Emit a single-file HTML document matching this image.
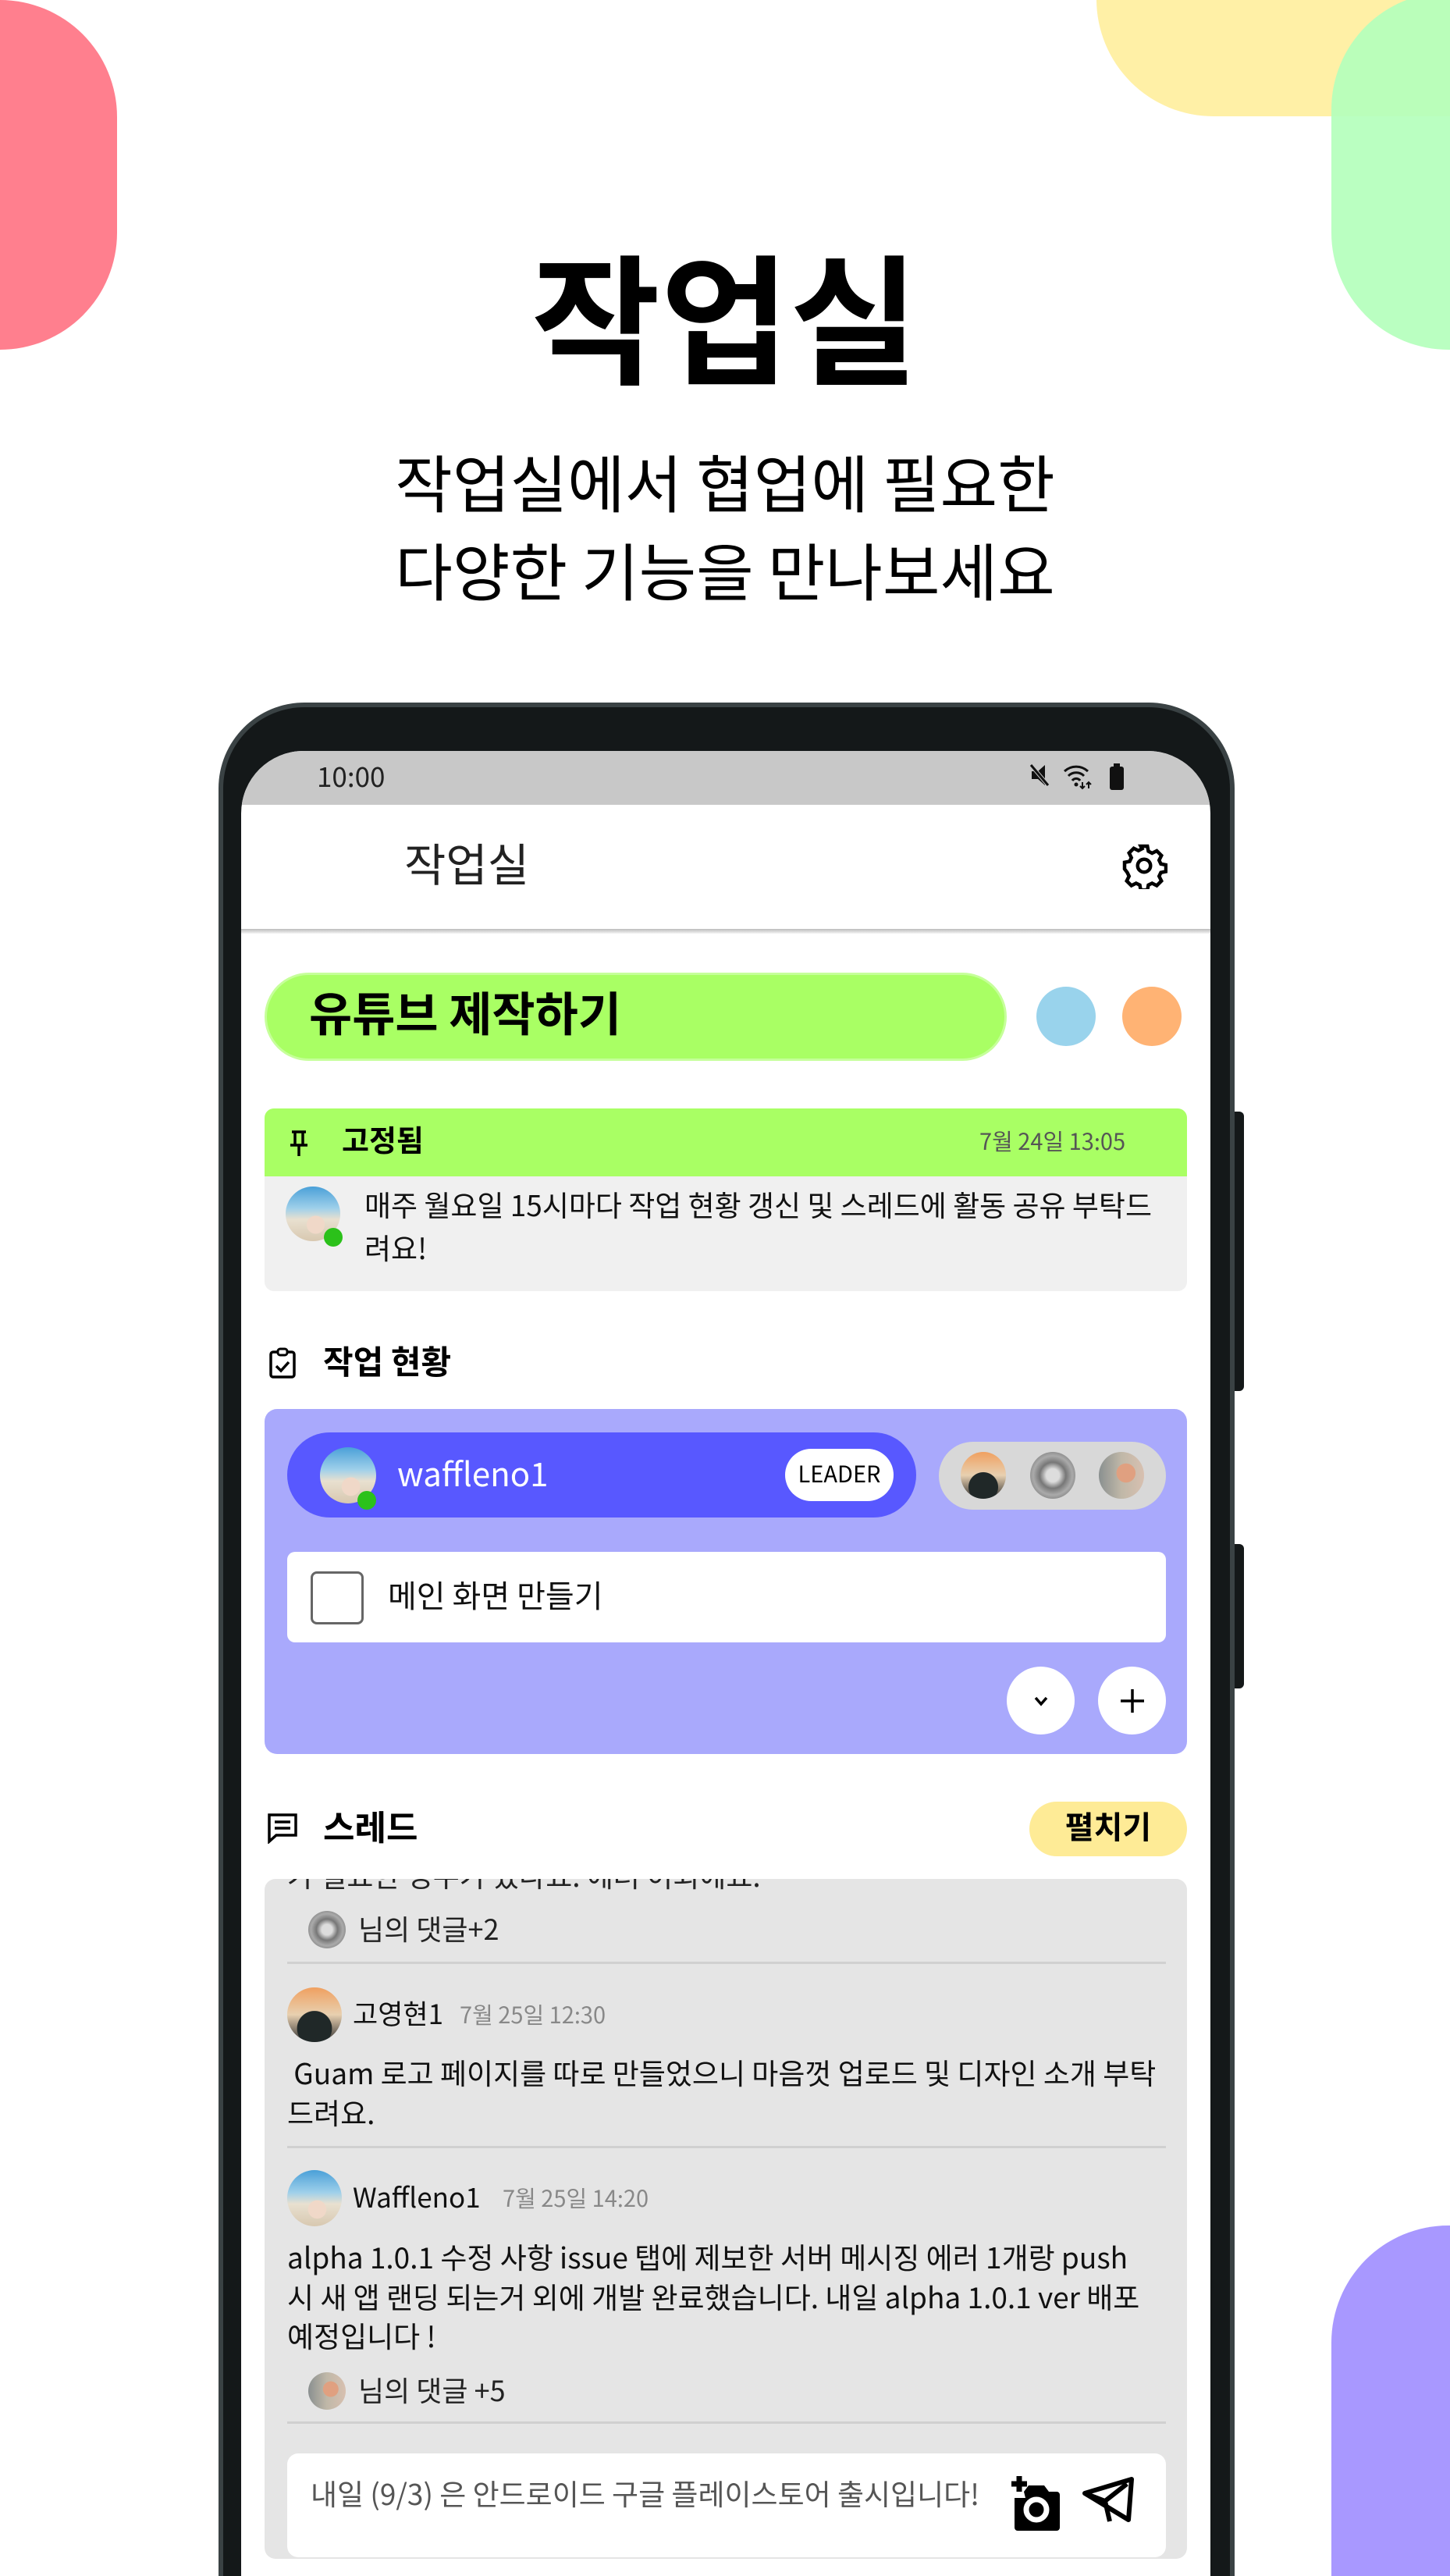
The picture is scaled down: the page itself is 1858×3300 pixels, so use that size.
<!DOCTYPE html>
<html><head><meta charset="utf-8">
<style>
*{margin:0;padding:0;box-sizing:border-box}
html,body{width:1858px;height:3300px;overflow:hidden}
body{position:relative;background:#fff;font-family:"Noto Sans CJK KR","Liberation Sans",sans-serif;color:#000}
#w{position:absolute;left:0;top:0;width:1858px;height:3300px;overflow:hidden}
.a{position:absolute}
.t{position:absolute;white-space:nowrap;line-height:1}
.av{position:absolute;border-radius:50%}
.beach{background:radial-gradient(circle at 55% 70%,#f0d8c8 0 18%,transparent 19%),linear-gradient(#4aa0d8 0%,#9fd0ea 40%,#e8e0d0 60%,#d8c8b0 100%)}
.dark{background:radial-gradient(circle at 50% 75%,#202828 0 35%,transparent 36%),linear-gradient(#f0a060,#e8d0b0 50%,#303030)}
.gray{background:radial-gradient(circle at 50% 50%,#ddd 0 20%,#777 40%,#aaa 60%,#555 100%)}
.woman{background:radial-gradient(circle at 60% 45%,#e0a080 0 25%,transparent 26%),linear-gradient(90deg,#8a9090,#c0b8a8 50%,#d8c0b0)}
.dot{position:absolute;width:24px;height:24px;border-radius:50%;background:#2bc11a}
</style></head><body><div id="w">
<div class="a" style="left:-150px;top:0;width:300px;height:448px;background:#ff7f8e;border-radius:0 150px 150px 0"></div>
<div class="a" style="left:1405px;top:-300px;width:600px;height:449px;background:#fff0a6;border-radius:150px"></div>
<div class="a" style="left:1706px;top:-10px;width:300px;height:458px;background:#b4ffbc;border-radius:150px;opacity:.92"></div>
<div class="a" style="left:1706px;top:2851px;width:300px;height:600px;background:#a898ff;border-radius:150px"></div>

<div class="t" style="left:0;width:1858px;text-align:center;top:310px;font-size:180px;font-weight:bold">작업실</div>
<div class="t" style="left:0;width:1858px;text-align:center;top:576px;font-size:80px">작업실에서 협업에 필요한</div>
<div class="t" style="left:0;width:1858px;text-align:center;top:689px;font-size:80px">다양한 기능을 만나보세요</div>

<div class="a" style="left:1580px;top:1424px;width:14px;height:358px;background:#141819;border-radius:0 6px 6px 0"></div>
<div class="a" style="left:1580px;top:1978px;width:14px;height:185px;background:#141819;border-radius:0 6px 6px 0"></div>
<div class="a" style="left:280px;top:900px;width:1302px;height:2400px;background:#141819;border:6px solid #3a4244;border-bottom:0;border-radius:110px 110px 0 0"></div>
<div class="a" style="left:309px;top:962px;width:1242px;height:2338px;background:#fff;border-radius:80px 80px 0 0;overflow:hidden">
  <div class="a" style="left:0;top:0;width:1242px;height:69px;background:#c8c8c8"></div>
</div>
<div class="t" style="left:406px;top:976px;font-size:35px;color:#222">10:00</div>
<svg class="a" style="left:1318px;top:976px" width="100" height="36" viewBox="0 0 100 36">
 <path d="M4 12h8l9-8v26l-9-8H4z" fill="#111"/><path d="M3 4l22 26" stroke="#c8c8c8" stroke-width="5"/><path d="M3 4l22 26" stroke="#111" stroke-width="3"/>
 <path d="M46 12a22 22 0 0 1 30 0M51 18a14 14 0 0 1 20 0M56 24a6 6 0 0 1 10 0" stroke="#111" stroke-width="3" fill="none"/>
 <circle cx="61" cy="29" r="2.5" fill="#111"/><path d="M69 26v8M66 31l3 3 3-3M77 34v-8M74 29l3-3 3 3" stroke="#111" stroke-width="2" fill="none"/>
</svg>
<div class="a" style="left:1422px;top:982px;width:18px;height:30px;background:#111;border-radius:3px"></div>
<div class="a" style="left:1427px;top:978px;width:8px;height:5px;background:#111"></div>

<div class="a" style="left:309px;top:1190px;width:1242px;height:6px;background:linear-gradient(#bbb,#f4f4f4)"></div>
<div class="t" style="left:518px;top:1075px;font-size:58px;color:#222">작업실</div>
<svg class="a" style="left:1436px;top:1079px" width="60" height="60" viewBox="0 0 24 24"><path fill="none" stroke="#000" stroke-width="1.8" d="M10.3 2h3.4l.5 2.6 1.9 1 2.4-1.2 2.4 2.4-1.2 2.4.9 1.9 2.6.5v3.4l-2.6.5-.9 1.9 1.2 2.4-2.4 2.4-2.4-1.2-1.9.9-.5 2.6h-3.4l-.5-2.6-1.9-.9-2.4 1.2-2.4-2.4 1.2-2.4-.9-1.9L2 13.7v-3.4l2.6-.5.9-1.9-1.2-2.4 2.4-2.4 2.4 1.2 1.9-1z"/><circle cx="12" cy="12" r="3.3" fill="none" stroke="#000" stroke-width="1.8"/></svg>

<div class="a" style="left:339px;top:1246px;width:951px;height:113px;background:#a9ff64;border:3px solid #c6ff9a;border-radius:57px"></div>
<div class="t" style="left:396px;top:1266px;font-size:60px;font-weight:bold">유튜브 제작하기</div>
<div class="av" style="left:1328px;top:1264px;width:76px;height:76px;background:#99d3ec"></div>
<div class="av" style="left:1438px;top:1264px;width:76px;height:76px;background:#ffb374"></div>

<div class="a" style="left:339px;top:1420px;width:1182px;height:234px;background:#f0f0f0;border-radius:12px;overflow:hidden">
 <div class="a" style="left:0;top:0;width:1182px;height:87px;background:#a9ff64"></div>
</div>
<svg class="a" style="left:368px;top:1447px" width="30" height="36" viewBox="0 0 30 36"><path d="M6 3h18M10 3v16M20 3v16M4 20h22M15 20v14" stroke="#000" stroke-width="3.5" fill="none"/></svg>
<div class="t" style="left:438px;top:1440px;font-size:38px;font-weight:bold">고정됨</div>
<div class="t" style="left:1255px;top:1447px;font-size:29px;color:#555">7월 24일 13:05</div>
<div class="av beach" style="left:366px;top:1520px;width:70px;height:70px"></div>
<div class="dot" style="left:415px;top:1573px"></div>
<div class="t" style="left:467px;top:1524px;font-size:37px;color:#111">매주 월요일 15시마다 작업 현황 갱신 및 스레드에 활동 공유 부탁드</div>
<div class="t" style="left:467px;top:1579px;font-size:37px;color:#111">려요!</div>

<svg class="a" style="left:344px;top:1726px" width="36" height="40" viewBox="0 0 36 40"><rect x="3" y="6" width="30" height="32" rx="3" fill="none" stroke="#000" stroke-width="3.5"/><rect x="12" y="2" width="12" height="8" rx="3" fill="#fff" stroke="#000" stroke-width="3"/><path d="M10 24l6 6 10-11" stroke="#000" stroke-width="3.5" fill="none"/></svg>
<div class="t" style="left:414px;top:1722px;font-size:42px;font-weight:bold">작업 현황</div>
<div class="a" style="left:339px;top:1805px;width:1182px;height:442px;background:#a9a9fc;border-radius:16px"></div>
<div class="a" style="left:368px;top:1835px;width:806px;height:109px;background:#5858ff;border-radius:55px"></div>
<div class="av beach" style="left:410px;top:1854px;width:72px;height:72px"></div>
<div class="dot" style="left:458px;top:1910px"></div>
<div class="t" style="left:509px;top:1866px;font-size:42px;color:#fff">waffleno1</div>
<div class="a" style="left:1006px;top:1856px;width:139px;height:67px;background:#fff;border-radius:34px"></div>
<div class="t" style="left:1006px;width:139px;text-align:center;top:1873px;font-size:29px">LEADER</div>
<div class="a" style="left:1203px;top:1847px;width:291px;height:87px;background:#d8d8d8;border-radius:44px"></div>
<div class="av dark" style="left:1231px;top:1860px;width:58px;height:60px"></div>
<div class="av gray" style="left:1320px;top:1860px;width:58px;height:60px"></div>
<div class="av woman" style="left:1408px;top:1860px;width:58px;height:60px"></div>
<div class="a" style="left:368px;top:1988px;width:1126px;height:116px;background:#fff;border-radius:10px"></div>
<div class="a" style="left:398px;top:2013px;width:68px;height:68px;border:3px solid #666;border-radius:8px"></div>
<div class="t" style="left:497px;top:2022px;font-size:40px;color:#111">메인 화면 만들기</div>
<div class="av" style="left:1290px;top:2135px;width:87px;height:87px;background:#fff"></div>
<svg class="a" style="left:1320px;top:2165px" width="28" height="28" viewBox="0 0 28 28"><path d="M7 10l7 8 7-8" stroke="#000" stroke-width="3.5" fill="none"/></svg>
<div class="av" style="left:1407px;top:2135px;width:87px;height:87px;background:#fff"></div>
<svg class="a" style="left:1432px;top:2160px" width="38" height="38" viewBox="0 0 38 38"><path d="M19 4v30M4 19h30" stroke="#000" stroke-width="3.5"/></svg>

<svg class="a" style="left:342px;top:2322px" width="40" height="40" viewBox="0 0 40 40"><path d="M3 3h34v26H12l-9 8z" fill="none" stroke="#000" stroke-width="3.5"/><path d="M10 12h20M10 20h20" stroke="#000" stroke-width="3.5"/></svg>
<div class="t" style="left:414px;top:2316px;font-size:44px;font-weight:bold">스레드</div>
<div class="a" style="left:1319px;top:2308px;width:202px;height:70px;background:#feeb96;border-radius:35px"></div>
<div class="t" style="left:1319px;width:202px;text-align:center;top:2318px;font-size:40px;font-weight:bold">펼치기</div>
<div class="a" style="left:339px;top:2407px;width:1182px;height:871px;background:#e5e5e5;border-radius:14px;overflow:hidden">
 <div class="t" style="left:29px;top:-24px;font-size:37px;color:#222">가 필요한 경우가 있나요. 에러 이외에요.</div>
</div>
<div class="av gray" style="left:395px;top:2448px;width:48px;height:48px"></div>
<div class="t" style="left:459px;top:2452px;font-size:36px;color:#222">님의 댓글+2</div>
<div class="a" style="left:368px;top:2513px;width:1126px;height:3px;background:#d0d0d0"></div>
<div class="av dark" style="left:368px;top:2546px;width:70px;height:70px"></div>
<div class="t" style="left:452px;top:2561px;font-size:35px;color:#111">고영현1</div>
<div class="t" style="left:589px;top:2566px;font-size:29px;color:#888">7월 25일 12:30</div>
<div class="t" style="left:368px;top:2636px;font-size:37px;color:#111">&nbsp;Guam 로고 페이지를 따로 만들었으니 마음껏 업로드 및 디자인 소개 부탁</div>
<div class="t" style="left:368px;top:2687px;font-size:37px;color:#111">드려요.</div>
<div class="a" style="left:368px;top:2749px;width:1126px;height:3px;background:#d0d0d0"></div>
<div class="av beach" style="left:368px;top:2780px;width:70px;height:72px"></div>
<div class="t" style="left:452px;top:2796px;font-size:35px;color:#111">Waffleno1</div>
<div class="t" style="left:644px;top:2801px;font-size:29px;color:#888">7월 25일 14:20</div>
<div class="t" style="left:368px;top:2872px;font-size:37px;color:#111">alpha 1.0.1 수정 사항 issue 탭에 제보한 서버 메시징 에러 1개랑 push</div>
<div class="t" style="left:368px;top:2923px;font-size:37px;color:#111">시 새 앱 랜딩 되는거 외에 개발 완료했습니다. 내일 alpha 1.0.1 ver 배포</div>
<div class="t" style="left:368px;top:2973px;font-size:37px;color:#111">예정입니다 !</div>
<div class="av woman" style="left:395px;top:3039px;width:48px;height:48px"></div>
<div class="t" style="left:459px;top:3043px;font-size:36px;color:#222">님의 댓글 +5</div>
<div class="a" style="left:368px;top:3102px;width:1126px;height:3px;background:#d0d0d0"></div>
<div class="a" style="left:368px;top:3143px;width:1126px;height:133px;background:#fff;border-radius:14px"></div>
<div class="t" style="left:398px;top:3175px;font-size:37px;color:#555">내일 (9/3) 은 안드로이드 구글 플레이스토어 출시입니다!</div>
<svg class="a" style="left:1290px;top:3170px" width="72" height="74" viewBox="0 0 72 74"><path d="M6 12h20M16 2v20" stroke="#000" stroke-width="7"/><path d="M22 22l6-8h20l6 8h10a4 4 0 0 1 4 4v42a4 4 0 0 1-4 4H14a4 4 0 0 1-4-4V30h14z" fill="#000"/><circle cx="38" cy="45" r="13" fill="none" stroke="#fff" stroke-width="7"/></svg>
<svg class="a" style="left:1386px;top:3172px" width="70" height="62" viewBox="0 0 70 62"><path d="M4 22L64 4 60 56z" fill="none" stroke="#000" stroke-width="6" stroke-linejoin="round"/><path d="M4 22l26 10 28-22M30 32l6 26" stroke="#000" stroke-width="6" fill="none"/></svg>
</div></body></html>
